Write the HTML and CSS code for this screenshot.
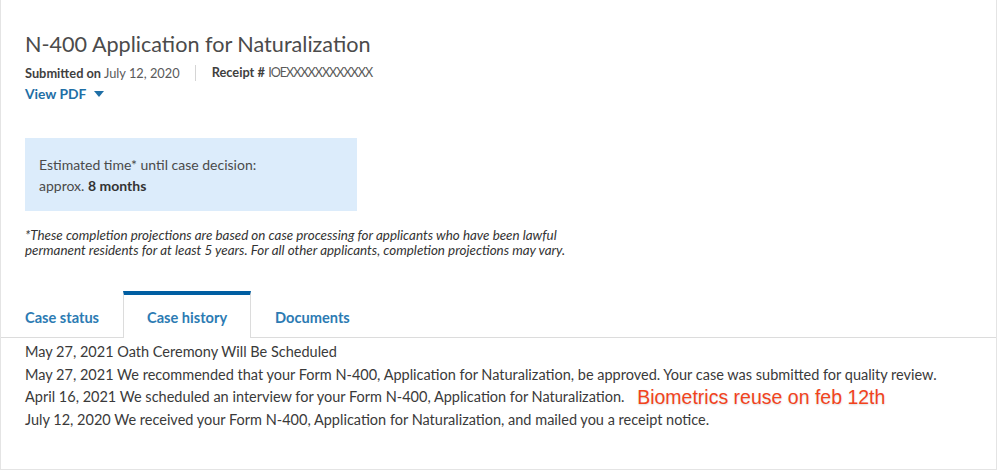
FILE: index.html
```html
<!DOCTYPE html>
<html>
<head>
<meta charset="utf-8">
<link rel="stylesheet" href="styles.css">
</head>
<body>
<div class="card">
  <h1 class="title">N-400 Application for Naturalization</h1>
  <div class="meta">
    <span><b>Submitted on</b> July 12, 2020</span>
    <span class="divider"></span>
    <span><b>Receipt #</b> <span class="receipt">IOEXXXXXXXXXXXX</span></span>
  </div>
  <a class="pdf">View PDF <svg class="caret" width="10" height="6" viewBox="0 0 10 6"><path d="M0 0 L10 0 L5 6 Z" fill="#1f6fa6"/></svg></a>
  <div class="estimate">
    <div>Estimated time* until case decision:</div>
    <div>approx. <b>8 months</b></div>
  </div>
  <p class="note">*These completion projections are based on case processing for applicants who have been lawful permanent residents for at least 5 years. For all other applicants, completion projections may vary.</p>
  <div class="tabs">
    <div class="tab">Case status</div>
    <div class="tab active">Case history</div>
    <div class="tab">Documents</div>
  </div>
  <ul class="history">
    <li>May 27, 2021 Oath Ceremony Will Be Scheduled</li>
    <li>May 27, 2021 We recommended that your Form N-400, Application for Naturalization, be approved. Your case was submitted for quality review.</li>
    <li>April 16, 2021 We scheduled an interview for your Form N-400, Application for Naturalization. <span class="annot">Biometrics reuse on feb 12th</span></li>
    <li>July 12, 2020 We received your Form N-400, Application for Naturalization, and mailed you a receipt notice.</li>
  </ul>
</div>
</body>
</html>
```
FILE: styles.css
```css
html, body { margin: 0; padding: 0; background: #fff; }
body { font-family: Lato, "Open Sans", sans-serif; color: #3d3d3d; }
.card {
  width: 997px; height: 470px; box-sizing: border-box;
  border: 1px solid #e4e4e4; border-top: none;
  padding: 31px 0 0 0;
}
.title {
  margin: 0 0 0 24px; font-size: 21.6px; line-height: 26px; font-weight: 400; color: #4b4b4b;
}
.meta {
  margin: 7px 0 0 24px; font-size: 12.8px; line-height: 16px; color: #5a5a5a;
  display: flex; align-items: center;
}
.meta b { color: #3f3f3f; font-weight: 700; }
.receipt { font-size: 12.6px; letter-spacing: -1px; }
.divider { width: 1px; height: 16px; background: #d5d5d5; margin: 0 16px 0 15px; }
.pdf {
  display: flex; align-items: center; gap: 8px;
  margin: 4px 0 0 24px; font-size: 13.8px; line-height: 17px; font-weight: 700; color: #1f6fa6;
}
.estimate {
  margin: 36px 0 0 24px; width: 332px; height: 73px; box-sizing: border-box;
  background: #dcecfb; padding: 16px 0 0 14px;
  font-size: 14px; line-height: 21px; color: #4a4a4a;
}
.estimate b { color: #333; }
.note {
  margin: 17px 0 0 24px; width: 556px; font-size: 13.4px; line-height: 15px; font-style: italic; color: #333;
}
.tabs {
  margin-top: 33px; display: flex; border-bottom: 1px solid #dcdcdc; height: 46px;
}
.tab {
  font-size: 14.6px; font-weight: 700; color: #2c7bb3; line-height: 17px;
  padding: 18px 24px 0 24px; box-sizing: border-box; height: 46px;
}
.tab.active {
  border-top: 4px solid #005ea2; border-left: 1px solid #dcdcdc; border-right: 1px solid #dcdcdc;
  background: #fff; margin-bottom: -1px; height: 47px; padding: 14px 23px 0 23px;
}
.history {
  list-style: none; margin: 3px 0 0 24px; padding: 0;
  font-size: 14.5px; line-height: 22.7px; color: #3a3a3a;
}
.annot {
  font-family: "Liberation Sans", Arial, sans-serif; font-size: 19.5px; line-height: 1; color: #f2431c;
  margin-left: 9px; vertical-align: -2px; text-shadow: 0 1px 2px rgba(0,0,0,0.15);
}
```
